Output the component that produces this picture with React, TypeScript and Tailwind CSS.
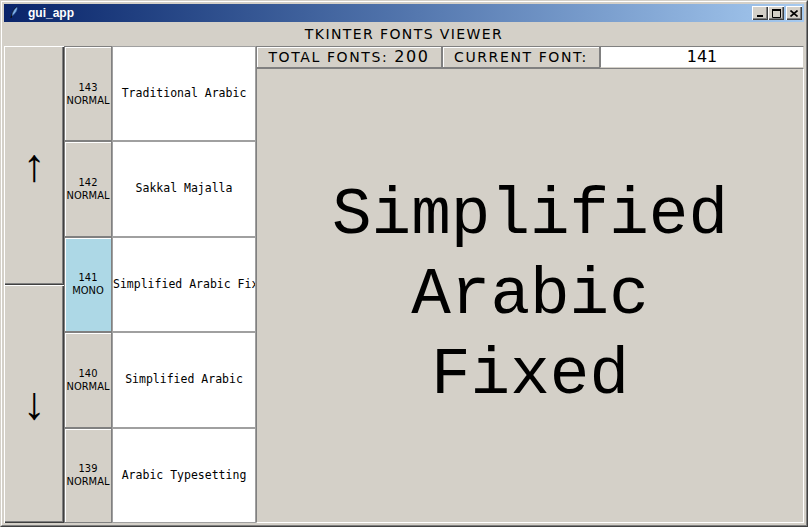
import React from 'react';

const fonts = [
    { id: 143, kind: 'NORMAL', name: 'Traditional Arabic' },
    { id: 142, kind: 'NORMAL', name: 'Sakkal Majalla' },
    { id: 141, kind: 'MONO', name: 'Simplified Arabic Fixed' },
    { id: 140, kind: 'NORMAL', name: 'Simplified Arabic' },
    { id: 139, kind: 'NORMAL', name: 'Arabic Typesetting' },
];

const current = 141;

const bevel = 'shadow-[inset_1px_1px_#ffffff,inset_-1px_-1px_#404040,inset_-2px_-2px_#808080]';

const CaptionButton: React.FC<{ children: React.ReactNode; className?: string }> = ({ children, className }) => (
    <div className={`w-4 h-[14px] bg-[#d4d0c8] flex items-center justify-center ${bevel} ${className ?? ''}`}>
        {children}
    </div>
);

const TitleBar: React.FC = () => (
    <div className="h-[18px] flex items-center bg-gradient-to-r from-[#0a246a] to-[#a6caf0] pl-[5px] pr-[2px]">
        <svg width="10" height="14" viewBox="0 0 10 14" className="mr-[9px]">
            <path d="M8 1 C5 3 3 7 2 12" stroke="#111" strokeWidth="1.2" fill="none" />
            <path d="M8 1 C9 4 6 8 3 10 C3 7 5 3 8 1 Z" fill="#7fb0e8" stroke="#2a4f8a" strokeWidth="0.6" />
        </svg>
        <span className="text-white font-bold text-[12px] leading-none [font-family:'Liberation_Sans',Arial,sans-serif]">gui_app</span>
        <div className="ml-auto flex items-center">
            <CaptionButton>
                <svg width="8" height="7" viewBox="0 0 8 7"><rect x="1" y="5" width="6" height="2" fill="#000" /></svg>
            </CaptionButton>
            <CaptionButton>
                <svg width="9" height="9" viewBox="0 0 9 9"><path d="M0.5 0.5h8v8h-8z" fill="none" stroke="#000" /><rect x="0" y="0" width="9" height="2" fill="#000" /></svg>
            </CaptionButton>
            <CaptionButton className="ml-[2px]">
                <svg width="8" height="7" viewBox="0 0 8 7"><path d="M0.5 0.5L7.5 6.5M7.5 0.5L0.5 6.5" stroke="#000" strokeWidth="1.6" /></svg>
            </CaptionButton>
        </div>
    </div>
);

const App: React.FC = () => {
    return (
        <div className="w-[808px] h-[527px] bg-[#d4d0c8] border border-t-[#d4d0c8] border-l-[#d4d0c8] border-b-[#404040] border-r-[#404040]">
            <div className="h-full w-full border border-t-white border-l-white border-b-[#808080] border-r-[#808080] p-[2px] flex flex-col">
                <TitleBar />
                <div className="flex-1 flex flex-col">
                    <div className="h-6 flex items-center justify-center text-[14px] tracking-[1.4px] text-black [font-family:'DejaVu_Sans',sans-serif]">
                        TKINTER FONTS VIEWER
                    </div>
                    <div className="flex-1 flex">
                        {/* scroll buttons */}
                        <div className="w-[60px] shrink-0 grid grid-rows-2">
                            <div className={`flex items-center justify-center text-[46px] text-black ${bevel} [font-family:'Liberation_Sans',sans-serif]`}>↑</div>
                            <div className={`flex items-center justify-center text-[46px] text-black ${bevel} [font-family:'Liberation_Sans',sans-serif]`}>↓</div>
                        </div>
                        {/* font list */}
                        <div className="w-[192px] shrink-0 grid grid-rows-5 grid-cols-[192px] overflow-hidden">
                            {fonts.map(f => (
                                <div key={f.id} className="flex min-w-0 overflow-hidden">
                                    <div className={`w-12 shrink-0 flex flex-col items-center justify-center border border-[#808080] shadow-[inset_1px_1px_#ffffff] text-[11px] leading-[13px] text-black [font-family:'DejaVu_Sans_Condensed','Liberation_Sans_Narrow',sans-serif] ${f.id === current ? 'bg-[#add8e6]' : 'bg-[#d4d0c8]'}`}>
                                        <span>{f.id}</span>
                                        <span>{f.kind}</span>
                                    </div>
                                    <div className="w-[144px] shrink-0 bg-white border border-[#a0a0a0] flex items-center overflow-hidden">
                                        <div className="w-full whitespace-nowrap text-center text-[11.5px] text-black [font-family:'DejaVu_Sans_Mono',monospace]">
                                            {f.name}
                                        </div>
                                    </div>
                                </div>
                            ))}
                        </div>
                        {/* viewer */}
                        <div className="flex-1 min-w-0 flex flex-col">
                            <div className="h-[22px] flex">
                                <div className="w-[186px] flex items-center justify-center border border-[#808080] shadow-[inset_1px_1px_#ffffff] text-[14px] tracking-[1.6px] text-black [font-family:'DejaVu_Sans',sans-serif]">
                                    TOTAL FONTS: <span className="text-[16px] ml-[6px]">200</span>
                                </div>
                                <div className="w-[158px] flex items-center justify-center border border-[#808080] shadow-[inset_1px_1px_#ffffff] text-[14px] tracking-[1.6px] text-black [font-family:'DejaVu_Sans',sans-serif]">
                                    CURRENT FONT:
                                </div>
                                <div className="flex-1 flex items-center justify-center bg-white border border-[#808080] border-b-[#d4d0c8] border-r-[#d4d0c8] text-[16px] text-black [font-family:'DejaVu_Sans',sans-serif]">
                                    {current}
                                </div>
                            </div>
                            <div className="flex-1 flex flex-col items-center justify-center border border-[#808080] border-b-white border-r-white text-[66px] leading-[80px] text-black [font-family:'Liberation_Mono','Courier_New',monospace]">
                                <span>Simplified</span>
                                <span>Arabic</span>
                                <span>Fixed</span>
                            </div>
                        </div>
                    </div>
                </div>
            </div>
        </div>
    );
};

export default App;
